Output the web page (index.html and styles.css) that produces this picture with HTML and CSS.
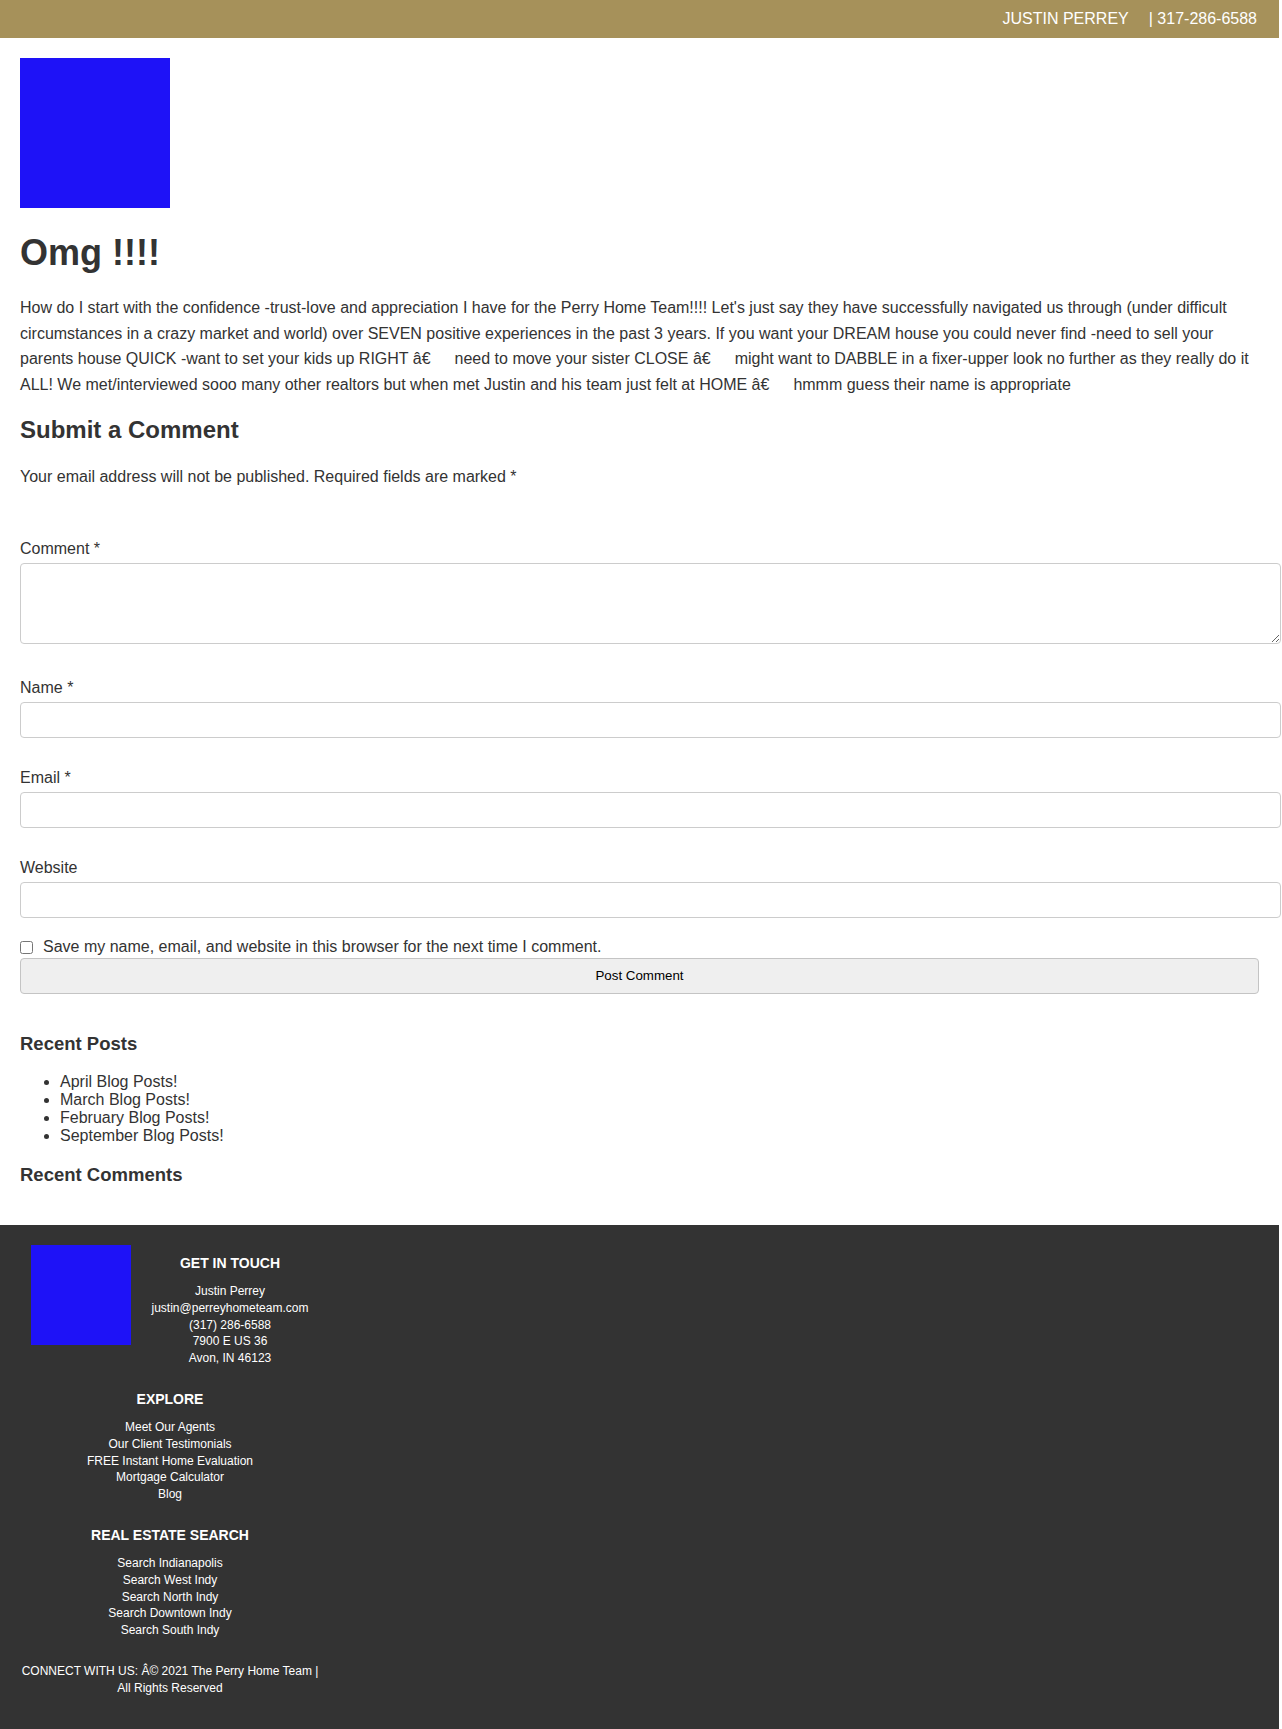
FILE: index.html
```html
<!DOCTYPE html>
<html lang="en">
<head>
<meta charset="utf-8">
<title>Omg !!!! - The Perry Home Team</title>
<link rel="stylesheet" href="styles.css">
</head>
<body>
<div class="page">
  <header class="topbar">
    <span class="agent">JUSTIN PERREY</span>
    <span class="phone">| 317-286-6588</span>
  </header>

  <main class="content">
    <div class="logo" aria-label="The Perry Home Team logo"></div>
    <h1 class="title">Omg !!!!</h1>
    <p class="review">How do I start with the confidence -trust-love and appreciation I have for the Perry Home Team!!!! Let's just say they have successfully navigated us through (under difficult circumstances in a crazy market and world) over SEVEN positive experiences in the past 3 years. If you want your DREAM house you could never find -need to sell your parents house QUICK -want to set your kids up RIGHT â€&ensp;&emsp;need to move your sister CLOSE â€&ensp;&emsp;might want to DABBLE in a fixer-upper look no further as they really do it ALL! We met/interviewed sooo many other realtors but when met Justin and his team just felt at HOME â€&ensp;&emsp;hmmm guess their name is appropriate</p>

    <section class="respond">
      <h2 class="respond-title">Submit a Comment</h2>
      <p class="notes">Your email address will not be published. Required fields are marked *</p>
      <form class="comment-form" action="#" onsubmit="return false;">
        <div class="field field-comment">
          <label for="comment">Comment *</label>
          <textarea id="comment" class="textarea"></textarea>
        </div>
        <div class="field">
          <label for="author">Name *</label>
          <input id="author" class="text-input" type="text">
        </div>
        <div class="field">
          <label for="email">Email *</label>
          <input id="email" class="text-input" type="text">
        </div>
        <div class="field field-url">
          <label for="url">Website</label>
          <input id="url" class="text-input" type="text">
        </div>
        <div class="cookies">
          <input id="cookies" class="checkbox" type="checkbox">
          <label for="cookies">Save my name, email, and website in this browser for the next time I comment.</label>
        </div>
        <div class="submit-row">
          <button class="submit" type="button">Post Comment</button>
        </div>
      </form>
    </section>

    <aside class="widgets">
      <h3 class="widget-title">Recent Posts</h3>
      <ul class="recent-list">
        <li>April Blog Posts!</li>
        <li>March Blog Posts!</li>
        <li>February Blog Posts!</li>
        <li>September Blog Posts!</li>
      </ul>
      <h3 class="widget-title widget-second">Recent Comments</h3>
    </aside>
  </main>

  <footer class="footer">
    <div class="f-inner">
      <div class="f-logo"><div class="logo-sm"></div></div>
      <div class="f-col f-touch">
        <h4 class="f-head">GET IN TOUCH</h4>
        <ul class="f-list">
          <li>Justin Perrey</li>
          <li>justin@perreyhometeam.com</li>
          <li>(317) 286-6588</li>
          <li>7900 E US 36</li>
          <li>Avon, IN 46123</li>
        </ul>
      </div>
      <div class="f-col">
        <h4 class="f-head">EXPLORE</h4>
        <ul class="f-list">
          <li>Meet Our Agents</li>
          <li>Our Client Testimonials</li>
          <li>FREE Instant Home Evaluation</li>
          <li>Mortgage Calculator</li>
          <li>Blog</li>
        </ul>
      </div>
      <div class="f-col">
        <h4 class="f-head">REAL ESTATE SEARCH</h4>
        <ul class="f-list">
          <li>Search Indianapolis</li>
          <li>Search West Indy</li>
          <li>Search North Indy</li>
          <li>Search Downtown Indy</li>
          <li>Search South Indy</li>
        </ul>
      </div>
      <p class="f-copy">CONNECT WITH US: Â© 2021 The Perry Home Team | All Rights Reserved</p>
    </div>
  </footer>
</div>
</body>
</html>
```

FILE: styles.css
```css
html, body {
  margin: 0;
  padding: 0;
  background: #ffffff;
}

body {
  font-family: "Liberation Sans", Arial, Helvetica, sans-serif;
  color: #333333;
  font-size: 16px;
}

.page {
  width: 1279px;
}

/* Top bar */
.topbar {
  height: 38px;
  background: #a6915a;
  color: #ffffff;
  display: flex;
  justify-content: flex-end;
  align-items: center;
  padding-right: 22px;
  font-size: 16px;
  line-height: 18px;
}

.topbar .phone {
  margin-left: 20px;
}

/* Main content */
.content {
  padding: 20px 20px 39.5px;
}

.logo {
  width: 150px;
  height: 150px;
  background: #1e12f7;
}

.title {
  margin: 24px 0 0;
  font-size: 36px;
  line-height: 41px;
  font-weight: bold;
  color: #333333;
}

.review {
  margin: 22px 0 0;
  font-size: 16px;
  line-height: 25.6px;
}

.respond-title {
  margin: 19px 0 0;
  font-size: 24px;
  line-height: 28px;
  font-weight: bold;
}

.notes {
  margin: 20px 0 0;
  font-size: 16px;
  line-height: 25.6px;
}

.comment-form {
  margin-top: 50.5px;
}

.field {
  margin: 0 0 31px;
}

.field-comment {
  margin-bottom: 35px;
}

.field-url {
  margin-bottom: 19px;
}

.field label {
  display: block;
  font-size: 16px;
  line-height: 18px;
  margin-bottom: 5px;
}

.text-input,
.textarea {
  display: block;
  box-sizing: content-box;
  width: 100%;
  margin: 0;
  padding: 8px 10px;
  border: 1px solid #cccccc;
  border-radius: 4px;
  background: #ffffff;
  font-family: "Liberation Sans", Arial, sans-serif;
  font-size: 14px;
  color: #333333;
}

.text-input {
  height: 18px;
}

.textarea {
  height: 63px;
  resize: both;
}

.cookies {
  display: flex;
  align-items: center;
  height: 20px;
  font-size: 16px;
  line-height: 18px;
}

.checkbox {
  width: 13px;
  height: 13px;
  margin: 1px 10px 0 0;
}

.submit-row {
  margin-top: 0.5px;
}

.submit {
  display: block;
  width: 100%;
  height: 36px;
  margin: 0;
  padding: 0 10px;
  background: #efefef;
  border: 1px solid #c4c4c4;
  border-radius: 4px;
  color: #000000;
  font-family: "Liberation Sans", Arial, sans-serif;
  font-size: 13.33px;
  cursor: pointer;
}

/* Widgets */
.widgets {
  margin-top: 39px;
}

.widget-title {
  margin: 0;
  font-size: 18.5px;
  line-height: 21px;
  font-weight: bold;
}

.widget-second {
  margin-top: 19.5px;
}

.recent-list {
  margin: 19px 0 0;
  padding-left: 40px;
  font-size: 16px;
  line-height: 18px;
}

/* Footer */
.footer {
  background: #333333;
  color: #ffffff;
  padding: 20px 0 32px 20px;
}

.f-inner {
  width: 300px;
  display: flex;
  flex-wrap: wrap;
  text-align: center;
}

.f-logo {
  width: 120px;
}

.logo-sm {
  width: 100px;
  height: 100px;
  margin-left: 11px;
  background: #1e12f7;
}

.f-col {
  width: 300px;
  padding: 10px 0 14px;
}

.f-touch {
  width: 180px;
}

.f-head {
  margin: 0 0 11px;
  font-size: 14px;
  line-height: 17px;
  font-weight: bold;
}

.f-list {
  list-style: none;
  margin: 0;
  padding: 0;
  font-size: 12px;
  line-height: 16.8px;
}

.f-copy {
  width: 300px;
  margin: 0;
  padding-top: 10px;
  font-size: 12px;
  line-height: 16.8px;
}
```
